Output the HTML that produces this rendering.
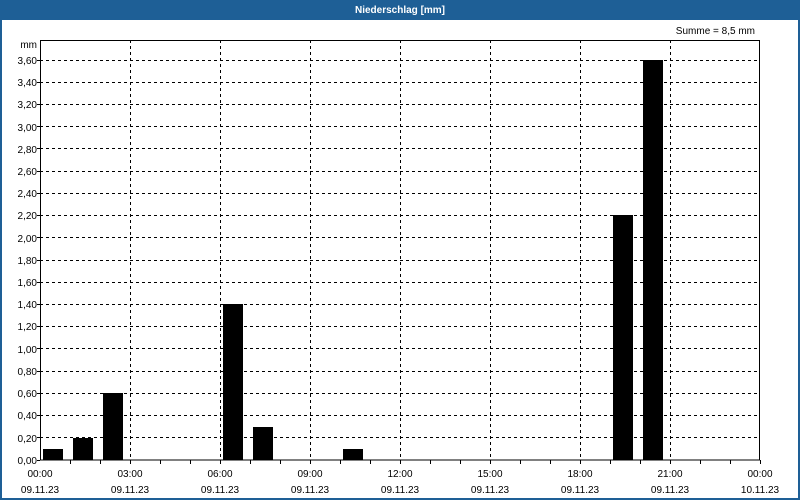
<!DOCTYPE html>
<html><head><meta charset="utf-8"><style>
html,body{margin:0;padding:0;background:#fff}
svg{display:block}
text{font-family:"Liberation Sans",sans-serif;font-size:10px;fill:#000}
</style></head><body>
<svg width="800" height="500" xmlns="http://www.w3.org/2000/svg">
<rect x="0" y="0" width="800" height="500" fill="#1e5f96"/>
<rect x="2" y="20" width="796" height="478" fill="#fff"/>
<text x="400" y="13" text-anchor="middle" style="font-weight:bold;fill:#fff">Niederschlag [mm]</text>
<text x="755" y="34" text-anchor="end">Summe = 8,5 mm</text>
<g stroke="#000" stroke-dasharray="3,3" stroke-width="1">
<path d="M40 437.5H760M40 415.5H760M40 393.5H760M40 371.5H760M40 348.5H760M40 326.5H760M40 304.5H760M40 282.5H760M40 260.5H760M40 237.5H760M40 215.5H760M40 193.5H760M40 171.5H760M40 148.5H760M40 126.5H760M40 104.5H760M40 82.5H760M40 60.5H760"/>
<path d="M130.5 40V460M220.5 40V460M310.5 40V460M400.5 40V460M490.5 40V460M580.5 40V460M670.5 40V460"/>
</g>
<g fill="#000">
<rect x="43" y="449" width="20" height="11"/>
<rect x="73" y="438" width="20" height="22"/>
<rect x="103" y="393" width="20" height="67"/>
<rect x="223" y="304" width="20" height="156"/>
<rect x="253" y="427" width="20" height="33"/>
<rect x="343" y="449" width="20" height="11"/>
<rect x="613" y="215" width="20" height="245"/>
<rect x="643" y="60" width="20" height="400"/>
</g>
<rect x="40.5" y="40.5" width="719" height="419.5" fill="none" stroke="#000"/>
<g stroke="#000">
<path d="M37 460.5H40M37 437.5H40M37 415.5H40M37 393.5H40M37 371.5H40M37 348.5H40M37 326.5H40M37 304.5H40M37 282.5H40M37 260.5H40M37 237.5H40M37 215.5H40M37 193.5H40M37 171.5H40M37 148.5H40M37 126.5H40M37 104.5H40M37 82.5H40M37 60.5H40"/>
<path d="M70.5 460V464M100.5 460V464M130.5 460V464M160.5 460V464M190.5 460V464M220.5 460V464M250.5 460V464M280.5 460V464M310.5 460V464M340.5 460V464M370.5 460V464M400.5 460V464M430.5 460V464M460.5 460V464M490.5 460V464M520.5 460V464M550.5 460V464M580.5 460V464M610.5 460V464M640.5 460V464M670.5 460V464M700.5 460V464M730.5 460V464M760.5 460V464"/>
</g>
<g text-anchor="end">
<text x="37" y="48">mm</text>
<text x="37" y="464">0,00</text><text x="37" y="442">0,20</text><text x="37" y="419">0,40</text><text x="37" y="397">0,60</text><text x="37" y="375">0,80</text><text x="37" y="353">1,00</text><text x="37" y="330">1,20</text><text x="37" y="308">1,40</text><text x="37" y="286">1,60</text><text x="37" y="264">1,80</text><text x="37" y="242">2,00</text><text x="37" y="219">2,20</text><text x="37" y="197">2,40</text><text x="37" y="175">2,60</text><text x="37" y="153">2,80</text><text x="37" y="131">3,00</text><text x="37" y="108">3,20</text><text x="37" y="86">3,40</text><text x="37" y="64">3,60</text>
</g>
<g text-anchor="middle">
<text x="40" y="477">00:00</text><text x="40" y="493">09.11.23</text>
<text x="130" y="477">03:00</text><text x="130" y="493">09.11.23</text>
<text x="220" y="477">06:00</text><text x="220" y="493">09.11.23</text>
<text x="310" y="477">09:00</text><text x="310" y="493">09.11.23</text>
<text x="400" y="477">12:00</text><text x="400" y="493">09.11.23</text>
<text x="490" y="477">15:00</text><text x="490" y="493">09.11.23</text>
<text x="580" y="477">18:00</text><text x="580" y="493">09.11.23</text>
<text x="670" y="477">21:00</text><text x="670" y="493">09.11.23</text>
<text x="760" y="477">00:00</text><text x="760" y="493">10.11.23</text>
</g>
</svg>
</body></html>
